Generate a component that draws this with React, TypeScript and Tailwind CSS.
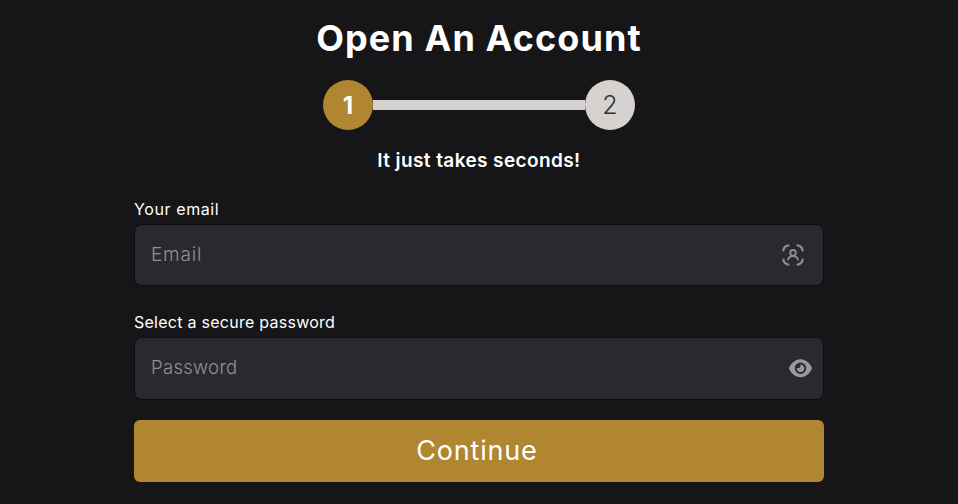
import { useState } from 'react';
import { FaEye } from 'react-icons/fa6';

const ScanUserIcon = () => (
  <svg
    width="22"
    height="22"
    viewBox="0 0 22 22"
    fill="none"
    stroke="#8e8e90"
    strokeWidth="2.3"
    strokeLinecap="round"
  >
    <path d="M1.4 6.4C1.8 3.6 3.6 1.8 6.4 1.4" />
    <path d="M15.6 1.4c2.8.4 4.6 2.2 5 5" />
    <path d="M20.6 15.6c-.4 2.8-2.2 4.6-5 5" />
    <path d="M6.4 20.6c-2.8-.4-4.6-2.2-5-5" />
    <circle cx="11" cy="8.8" r="2.8" strokeWidth="1.9" />
    <path d="M5.9 15.6c.8-2.2 2.7-3.5 5.1-3.5s4.3 1.3 5.1 3.5" strokeWidth="1.9" />
  </svg>
);

export default function App() {
  const [email, setEmail] = useState('');
  const [password, setPassword] = useState('');
  const [showPassword, setShowPassword] = useState(false);

  return (
    <div className="h-screen overflow-hidden bg-[#161618] font-['Inter',sans-serif] text-white">
      <div className="mx-auto flex w-[690px] flex-col pt-[15px]">
        <h1 className="text-center text-[36px] leading-[46px] font-bold whitespace-nowrap tracking-[1.1px]">
          Open An Account
        </h1>

        {/* Steps */}
        <div className="mt-[19px] flex items-center justify-center">
          <div className="flex size-[50px] items-center justify-center rounded-full bg-[#b08630] pt-0.5 text-2xl font-bold">
            1
          </div>
          <div className="h-2.5 w-[212px] bg-[#d5d2d0]" />
          <div className="flex size-[50px] items-center justify-center rounded-full bg-[#d5d2d0] pt-0.5 text-[25px] font-light text-[#333]">
            2
          </div>
        </div>

        <p className="mt-[19px] text-center text-[19px] leading-6 font-semibold tracking-[0.4px]">
          It just takes seconds!
        </p>

        <form onSubmit={(e) => e.preventDefault()}>
          <label
            htmlFor="email"
            className="mt-[26px] block h-[25px] text-base leading-5 tracking-[0.6px]"
          >
            Your email
          </label>
          <div className="flex h-[62px] items-center rounded-lg border border-[#0e0e10] bg-[#2a2a2e] pr-[19.5px] pl-4">
            <input
              id="email"
              type="email"
              value={email}
              onChange={(e) => setEmail(e.target.value)}
              placeholder="Email"
              className="min-w-0 flex-1 bg-transparent text-[19px] font-light tracking-[0.8px] outline-none placeholder:text-[#919191]"
            />
            <ScanUserIcon />
          </div>

          <label
            htmlFor="password"
            className="mt-[26px] block h-[25px] text-base leading-5 tracking-[0.26px]"
          >
            Select a secure password
          </label>
          <div className="flex h-[63px] items-center rounded-lg border border-[#0e0e10] bg-[#2a2a2e] pr-[11px] pl-4">
            <input
              id="password"
              type={showPassword ? 'text' : 'password'}
              value={password}
              onChange={(e) => setPassword(e.target.value)}
              placeholder="Password"
              className="min-w-0 flex-1 bg-transparent pb-px text-[18.5px] font-light tracking-[0.3px] outline-none placeholder:text-[#919191]"
            />
            <button type="button" onClick={() => setShowPassword(!showPassword)}>
              <FaEye className="h-[20.5px] w-[23px] text-[#999]" />
            </button>
          </div>

          <button
            type="submit"
            className="mt-5 h-[62px] w-full rounded-md bg-[#b08630] pr-1 text-[27px] font-normal tracking-[0.8px]"
          >
            Continue
          </button>
        </form>
      </div>
    </div>
  );
}
